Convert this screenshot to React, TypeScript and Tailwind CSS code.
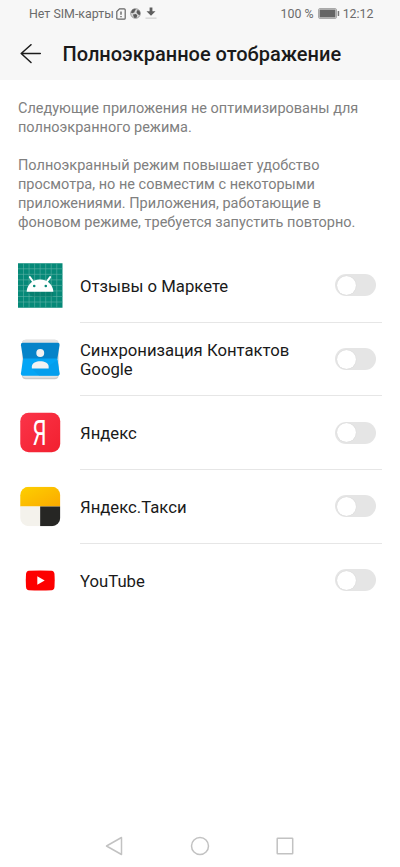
import { useState } from "react";
import type { ReactNode } from "react";

type AppItem = {
  name: string;
  icon: ReactNode;
};

const gridLines = [5.6, 11.2, 16.8, 22.4, 28, 33.6, 39.2];

const MarketIcon = () => (
  <svg width="44.5" height="45" viewBox="0 0 45 45">
    <rect width="45" height="45" fill="#068978" />
    <g stroke="#5fb3a7" strokeWidth="0.6">
      {gridLines.map((n) => (
        <path key={n} d={`M${n} 0V45M0 ${n}H45`} />
      ))}
    </g>
    <path d="M9 28.5L15 34H35.5V28.5Z" fill="#057566" opacity="0.5" />
    <path d="M8.700 28.700C9.500 21 15 16.500 22.200 16.500S35 21 35.800 28.700Z" fill="#fff" />
    <path d="M15.500 19L12 14M29 19L32.500 14" stroke="#fff" strokeWidth="2" strokeLinecap="round" />
    <circle cx="16.4" cy="23" r="1.3" fill="#068978" />
    <circle cx="28.1" cy="23" r="1.3" fill="#068978" />
  </svg>
);

const ContactsIcon = () => (
  <svg width="44.5" height="45" viewBox="0 0 45 45">
    <rect x="4" y="2.5" width="37" height="40" rx="4" fill="#c9c9c9" />
    <rect x="4" y="2.5" width="37" height="38.5" rx="4" fill="#e2e2e2" />
    <path d="M5 5.500H40Q42.300 5.500 42 8L39.800 22H5.200L3 8Q2.700 5.500 5 5.500Z" fill="#0583c9" />
    <path d="M5.200 21.500H39.800L42 36.500Q42.300 39 40 39H5Q2.700 39 3 36.500Z" fill="#04a5f5" />
    <path d="M14 31.500L21.500 39H40Q42.300 39 42 36.500L40 23L31 29Z" fill="#0398e6" opacity="0.5" />
    <circle cx="22.5" cy="16" r="4" fill="#f2f2f2" />
    <path d="M14 31.500V29.500C14 26 18.500 24.300 22.500 24.300S31 26 31 29.500V31.500Z" fill="#f2f2f2" />
  </svg>
);

const YandexIcon = () => (
  <svg width="44.5" height="45" viewBox="0 0 45 45">
    <defs>
      <linearGradient id="yandex" x1="0" y1="0" x2="1" y2="1">
        <stop offset="0" stopColor="#fb3449" />
        <stop offset="1" stopColor="#f2202f" />
      </linearGradient>
    </defs>
    <rect x="2.3" y="2.5" width="40.4" height="40" rx="8.5" fill="url(#yandex)" />
    <text
      transform="translate(21.800 34.700) scale(0.64 1)"
      textAnchor="middle"
      className="font-['Roboto',sans-serif] text-[35px]"
      fill="#fff"
    >
      Я
    </text>
  </svg>
);

const TaxiIcon = () => (
  <svg width="44.5" height="45" viewBox="0 0 45 45">
    <defs>
      <clipPath id="taxi-clip">
        <rect x="2.3" y="2.5" width="40.4" height="40" rx="8.5" />
      </clipPath>
      <linearGradient id="taxi" x1="0" y1="0" x2="1" y2="1">
        <stop offset="0" stopColor="#fdd000" />
        <stop offset="1" stopColor="#fba900" />
      </linearGradient>
    </defs>
    <g clipPath="url(#taxi-clip)">
      <rect x="2" y="2.5" width="41" height="20" fill="url(#taxi)" />
      <rect x="2" y="22.5" width="20.4" height="20" fill="#f4f2ec" />
      <rect x="22.4" y="22.5" width="20.6" height="20" fill="#262624" />
    </g>
  </svg>
);

const YoutubeIcon = () => (
  <svg width="44.5" height="45" viewBox="0 0 45 45">
    <path
      d="M11 12.700Q22.500 12 34 12.700Q36.600 13 36.900 16Q37.400 22.500 36.900 29Q36.600 32 34 32.300Q22.500 33 11 32.300Q8.400 32 8.100 29Q7.600 22.500 8.100 16Q8.400 13 11 12.700Z"
      fill="#fd0000"
    />
    <path d="M19.500 18.200V26.800L27 22.500Z" fill="#fff" />
  </svg>
);

const apps: AppItem[] = [
  { name: "Отзывы о Маркете", icon: <MarketIcon /> },
  { name: "Синхронизация Контактов Google", icon: <ContactsIcon /> },
  { name: "Яндекс", icon: <YandexIcon /> },
  { name: "Яндекс.Такси", icon: <TaxiIcon /> },
  { name: "YouTube", icon: <YoutubeIcon /> },
];

const StatusBar = () => (
  <div className="flex h-7 items-center justify-between pl-[29px] pr-[26.5px] text-[12.4px] text-[#6b6b6b]">
    <div className="flex items-center">
      <span>Нет SIM-карты</span>
      <svg className="ml-[2px]" width="10" height="12" viewBox="0 0 10 12" fill="none" stroke="#666" strokeWidth="1.2">
        <path d="M3.500 0.800H8.200Q9.200 0.800 9.200 1.800V10.200Q9.200 11.200 8.200 11.200H1.800Q0.800 11.200 0.800 10.200V3.500Z" />
        <path d="M5 3.500V6.800M5 8V9.300" strokeWidth="1.4" />
      </svg>
      <svg className="ml-1" width="11" height="11" viewBox="0 0 11 11">
        <circle cx="5.5" cy="5.5" r="4.8" fill="#d8d8d8" stroke="#888" strokeWidth="0.8" />
        <path d="M0.800 4.500L2.500 1.500L5 0.800L6 1.800L4.800 2.800L4.500 4.200L2.500 5.200ZM7 2.200L9.300 2.500L10.300 5L9.800 7L8 6.500L6.500 4.500ZM3 6.500L6 6L7.300 7.500L6.500 9.800L4.500 10L3.500 8.500Z" fill="#5c5c5c" />
      </svg>
      <svg className="ml-[4px]" width="12" height="13" viewBox="0 0 12 13">
        <path d="M4.600 0.500H7.400V4.300H10.500L6 8.800L1.500 4.300H4.600Z" fill="#5e5e5e" />
        <path d="M0.500 11.200H11.500" stroke="#d8d8d8" strokeWidth="1.5" />
      </svg>
    </div>
    <div className="flex items-center">
      <span>100 %</span>
      <svg className="ml-1 mr-[3px]" width="22" height="11" viewBox="0 0 22 11">
        <rect x="0.5" y="0.5" width="18" height="10" rx="1.5" fill="#f7f7f7" stroke="#aaa" />
        <rect x="1.5" y="1.5" width="16" height="8" fill="#656565" />
        <rect x="19.7" y="3" width="1.5" height="5" rx="0.5" fill="#777" />
      </svg>
      <span>12:12</span>
    </div>
  </div>
);

const Toggle = ({ label }: { label: string }) => {
  const [checked, setChecked] = useState(false);

  return (
    <button
      role="switch"
      aria-checked={checked}
      aria-label={label}
      onClick={() => setChecked(!checked)}
      className={`flex h-[22px] w-[41px] shrink-0 items-center rounded-full px-[2px] ${checked ? "justify-end bg-[#007dff]" : "justify-start bg-[#e5e5e5]"}`}
    >
      <span className="size-[19px] rounded-full bg-white shadow-[0_0_1px_rgba(0,0,0,0.15)]" />
    </button>
  );
};

const App = () => {
  return (
    <div className="flex h-[867px] w-[400px] flex-col bg-white font-['Roboto',sans-serif]">
      <header className="h-20 bg-[#f7f7f7]">
        <StatusBar />
        <div className="flex h-[52px] items-center pl-5">
          <button aria-label="Назад">
            <svg width="22" height="20" viewBox="0 0 22 20" fill="none" stroke="#1c1c1c" strokeWidth="1.5" strokeLinecap="round" strokeLinejoin="round">
              <path d="M11 0.700L1.200 9.500L11 18.500M1.200 9.500H20.300" />
            </svg>
          </button>
          <h1 className="ml-[20.5px] whitespace-nowrap text-[20px] font-medium text-[#1a1a1a]">Полноэкранное отображение</h1>
        </div>
      </header>

      <section className="h-[169px] pl-[18px] pt-[19px] text-[14.5px] leading-[19px] text-[#808080]">
        <p className="w-[350px]">Следующие приложения не оптимизированы для полноэкранного режима.</p>
        <p className="mt-[19px] w-[345px]">
          Полноэкранный режим повышает удобство просмотра, но не совместим с некоторыми приложениями. Приложения, работающие в фоновом режиме, требуется запустить повторно.
        </p>
      </section>

      <ul className="flex-1">
        {apps.map((app) => (
          <li key={app.name} className="flex h-[73.7px] pl-[18px] pr-[18px]">
            <div className="flex w-[62px] items-center pb-px">{app.icon}</div>
            <div className="flex flex-1 items-center justify-between border-b border-[#e6e6e6] pr-1.5 [li:last-child>&]:border-transparent">
              <span className="w-[230px] pt-[2.5px] text-[16.7px] leading-[19.5px] text-[#1a1a1a]">{app.name}</span>
              <Toggle label={app.name} />
            </div>
          </li>
        ))}
      </ul>

      <nav className="flex h-[43px] items-center justify-between pl-[105px] pr-[106px]">
        <svg width="18" height="20" viewBox="0 0 18 20" fill="none" stroke="#c2c2c2" strokeWidth="1.5" strokeLinejoin="round">
          <path d="M16.500 1.500V18.500L1.500 10Z" />
        </svg>
        <svg width="20" height="20" viewBox="0 0 20 20" fill="none" stroke="#c2c2c2" strokeWidth="1.5">
          <circle cx="10" cy="10" r="8.5" />
        </svg>
        <svg width="18" height="18" viewBox="0 0 18 18" fill="none" stroke="#c2c2c2" strokeWidth="1.5">
          <rect x="1.2" y="1.2" width="15.5" height="15.5" rx="0.5" />
        </svg>
      </nav>
    </div>
  );
};

export default App;
